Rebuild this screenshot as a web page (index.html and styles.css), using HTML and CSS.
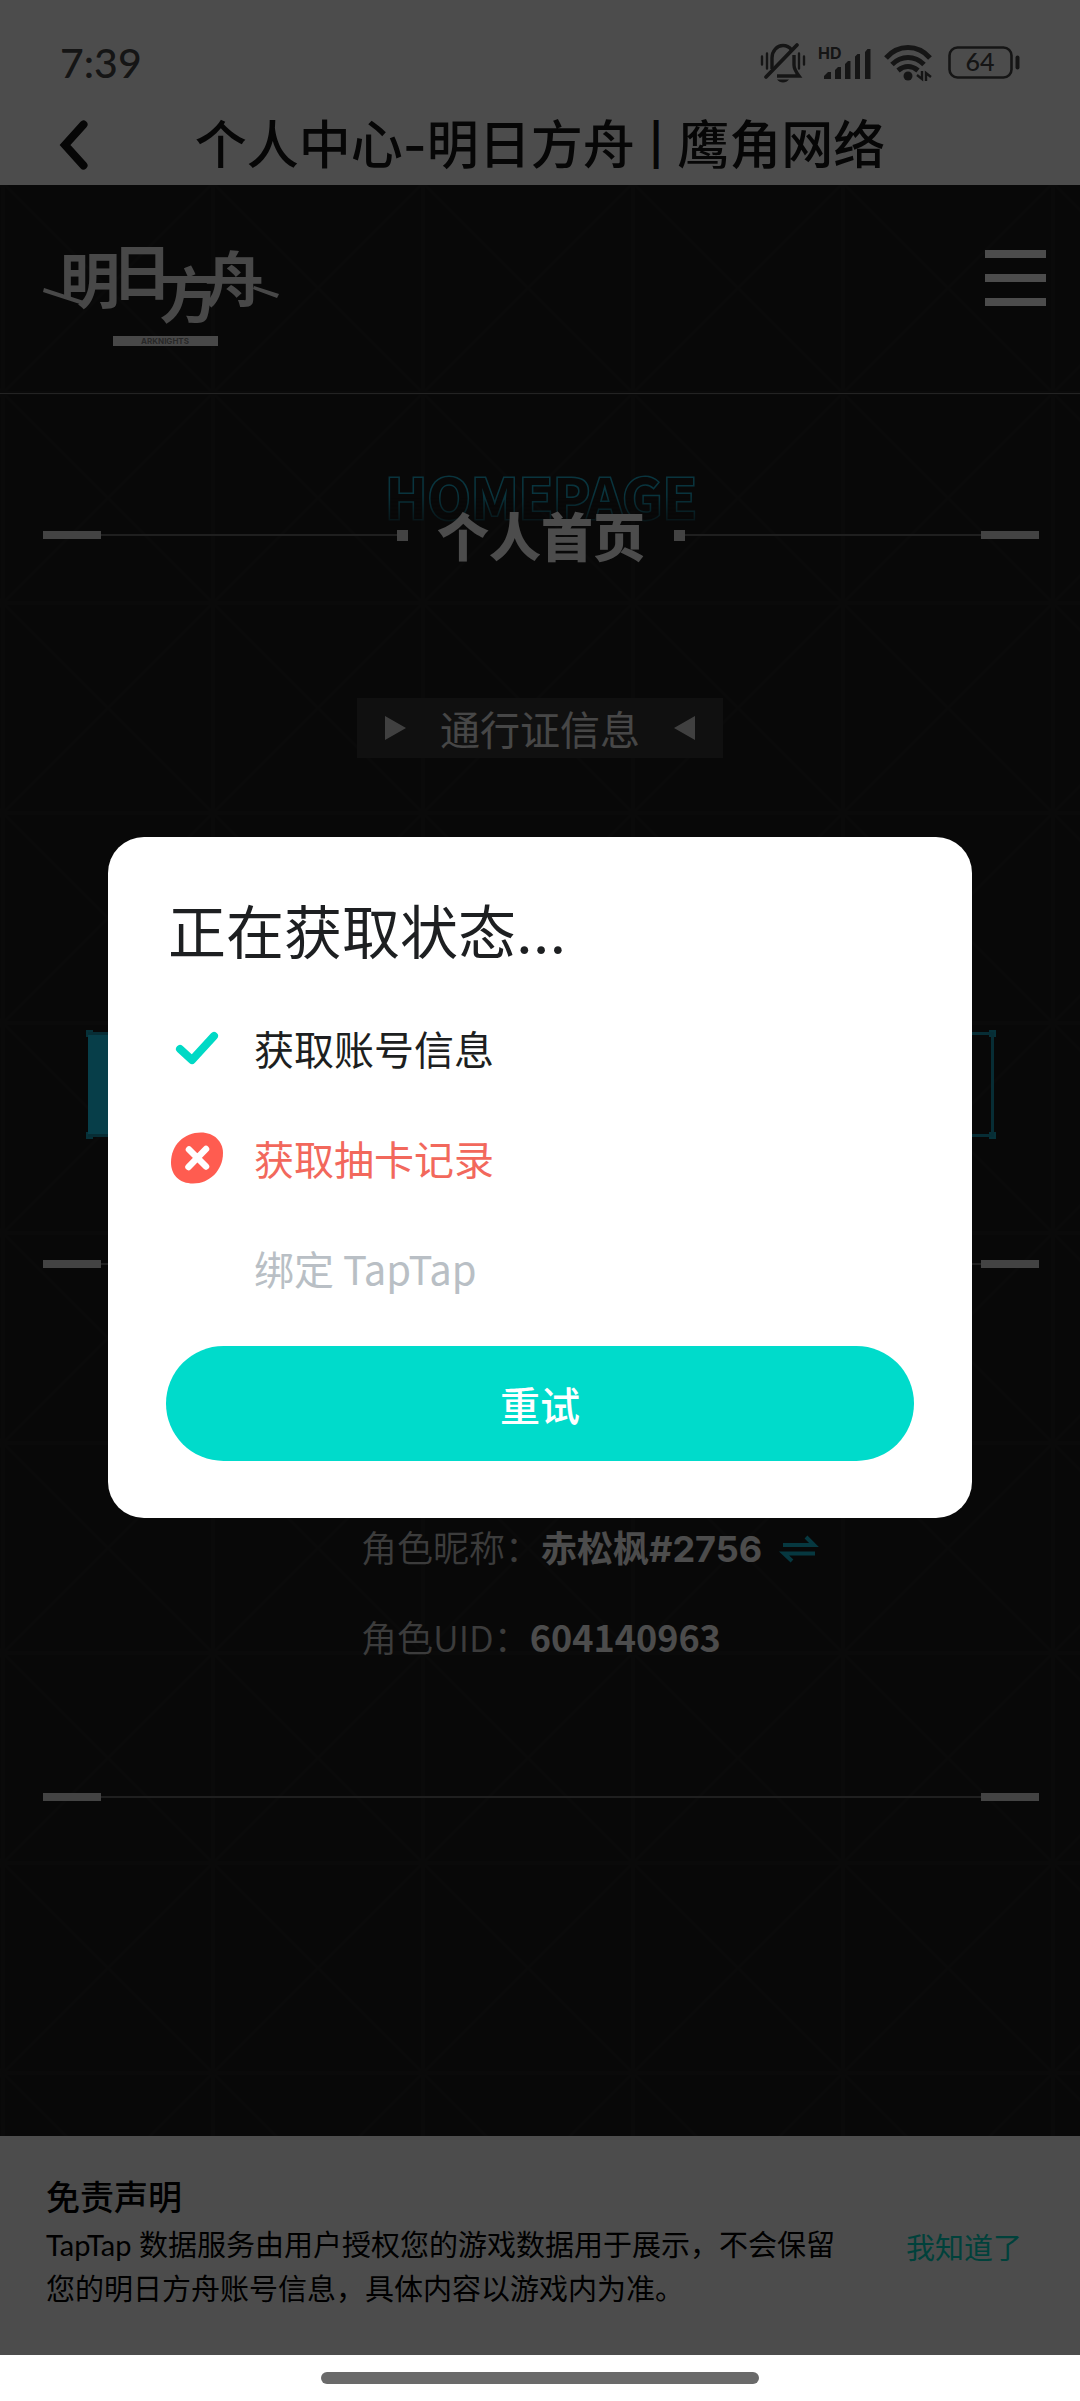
FILE: index.html
```html
<!DOCTYPE html>
<html lang="zh-CN">
<head>
<meta charset="utf-8">
<meta name="viewport" content="width=device-width, initial-scale=1">
<title>个人中心-明日方舟 | 鹰角网络</title>
<link rel="stylesheet" href="styles.css">
</head>
<body>
<div class="app">
  <div class="status">
    <span class="status-time">7:39</span>
    <div class="status-icons">
      <svg class="ic-bell" width="46" height="40" viewBox="0 0 46 40" fill="none" stroke="currentColor" stroke-width="3.4" stroke-linecap="butt">
        <path d="M2 13.500v8M7 10.500v15M39 10.500v15M44 13.500v8" stroke-width="2.400" stroke-linecap="round"/>
        <path d="M12 26V15c0-7 5-12.500 11-12.500 3.500 0 6.500 1.600 8.500 4.200M34 12v10c0 4 2 7 5 11H17"/>
        <path d="M6 34L37 2" stroke-width="3.800" stroke-linecap="round"/>
        <path d="M17 36.500h12c-1.500 2-3.500 3-6 3s-4.500-1-6-3z" fill="currentColor" stroke="none"/>
      </svg>
      <svg class="ic-signal" width="54" height="34" viewBox="0 0 54 34" fill="currentColor">
        <text x="0" y="13" class="hd">HD</text>
        <path d="M6 33v-3l4-4h3v7zM17 33v-9l3-3h3v12zM27 33V18l3-3h2.500v18zM37 33V10.500L39.500 8H42v25zM47 33V6l2.500-3H52.500v30z"/>
      </svg>
      <svg class="ic-wifi" width="48" height="38" viewBox="0 0 48 38" fill="none" stroke="currentColor" stroke-width="5">
        <path d="M2 14C8 7 15 3.500 24 3.500S40 7 46 14M8 20.500c4.500-4.500 9.500-7 16-7s11.500 2.500 16 7M14 26.500c3-2.500 6-4 10-4s7 1.500 10 4"/>
        <circle cx="24" cy="32" r="4.500" fill="currentColor" stroke="none"/>
        <path d="M38 27v8l-5-4M42 37v-8l5 4" stroke-width="2.400"/>
      </svg>
      <svg class="ic-battery" width="72" height="34" viewBox="0 0 72 34" fill="none" stroke="currentColor" stroke-width="2.600">
        <rect x="1.500" y="1.500" width="62" height="30" rx="8"/>
        <path d="M69.500 11.500v10" stroke-width="4" stroke-linecap="round"/>
        <text x="32" y="25" text-anchor="middle" class="level">64</text>
      </svg>
    </div>
  </div>
  <header class="titlebar">
    <button class="back" type="button" aria-label="返回">
      <svg width="28" height="50" viewBox="0 0 28 50" fill="none" stroke="currentColor" stroke-width="8" stroke-linecap="round" stroke-linejoin="miter"><path d="M23.500 4.500L5 25l18.500 20.500"/></svg>
    </button>
    <h1 class="title">个人中心-明日方舟 <span class="sep">|</span> 鹰角网络</h1>
  </header>

  <main class="site">
    <svg class="pattern" width="100%" height="100%" aria-hidden="true">
      <defs>
        <pattern id="grid" x="3" y="-2" width="210" height="210" patternUnits="userSpaceOnUse">
          <path d="M0 0v210M210 0v210M0 0h210M0 210h210" stroke-width="4"/>
          <path d="M0 0l210 210M210 0L0 210" stroke-width="3"/>
        </pattern>
      </defs>
      <rect width="100%" height="100%" fill="url(#grid)" stroke="none"/>
    </svg>

    <div class="site-head">
      <a class="logo" href="#" aria-label="明日方舟">
        <svg width="236" height="112" viewBox="0 0 236 112" fill="currentColor">
          <path d="M1 53l43 14-1 4L0 57zM211 51l25 8-2 4-24-9z"/>
          <g class="logo-type">
            <text x="17" y="68">明</text>
            <text x="69" y="60">日</text>
            <text x="116" y="83">方</text>
            <text x="161" y="67">舟</text>
          </g>
          <rect x="70" y="101" width="105" height="10"/>
          <text x="122" y="109" text-anchor="middle" class="logo-sub">ARKNIGHTS</text>
        </svg>
      </a>
      <button class="menu" type="button" aria-label="菜单"><span></span><span></span><span></span></button>
    </div>

    <div class="rule heading">
      <i class="cap"></i><i class="line"></i><i class="dot"></i>
      <h2>个人首页<span class="ghost">HOMEPAGE</span></h2>
      <i class="dot"></i><i class="line"></i><i class="cap"></i>
    </div>

    <h3 class="tag"><i class="tri"></i>通行证信息<i class="tri flip"></i></h3>

    <div class="tabs"><div class="tabs-box"></div></div>

    <div class="rule"><i class="cap"></i><i class="line"></i><i class="cap"></i></div>

    <dl class="role">
      <div><dt>角色昵称：</dt><dd class="name">赤松枫#2756</dd>
        <dd><button class="swap" type="button" aria-label="切换角色">
          <svg width="34" height="26" viewBox="0 0 34 26" fill="none" stroke="currentColor" stroke-width="4"><path d="M1 9h31L24 1M33 17.500H2l8 7.500"/></svg>
        </button></dd></div>
      <div><dt>角色UID：</dt><dd>604140963</dd></div>
    </dl>

    <div class="rule"><i class="cap"></i><i class="line"></i><i class="cap"></i></div>
  </main>

  <section class="notice">
    <div class="notice-text">
      <h2>免责声明</h2>
      <p>TapTap 数据服务由用户授权您的游戏数据用于展示，不会保留您的明日方舟账号信息，具体内容以游戏内为准。</p>
    </div>
    <button class="notice-ok" type="button">我知道了</button>
  </section>

  <div class="scrim">
    <div class="dialog" role="dialog" aria-modal="true" aria-labelledby="dlg">
      <h2 id="dlg">正在获取状态...</h2>
      <ul class="steps">
        <li>
          <svg width="54" height="54" viewBox="0 0 54 54" fill="none" stroke="#00d9c5" stroke-width="8" stroke-linecap="round" stroke-linejoin="round"><path d="M10 28l12 11L44 15"/></svg>
          获取账号信息
        </li>
        <li class="failed">
          <svg width="54" height="54" viewBox="0 0 54 54">
            <path d="M31 1.500c13 0 22 9 22 20.500C53 39 40 52.500 23 52.500 9.500 52.500 1 44 1 31.500 1 14 14 1.500 31 1.500z" fill="#ff5c50"/>
            <path d="M19 18.500l17 17M36 18L18.500 36" stroke="#fff" stroke-width="6.500" stroke-linecap="round"/>
          </svg>
          获取抽卡记录
        </li>
        <li class="pending"><i class="blank"></i>绑定 TapTap</li>
      </ul>
      <button class="retry" type="button">重试</button>
    </div>
  </div>
</div>
<div class="gesture"><i></i></div>
</body>
</html>
```

FILE: styles.css
```css
* { box-sizing: border-box; }

body {
  margin: 0;
  min-height: 100vh;
  display: flex;
  flex-direction: column;
  background: #fff;
  font-family: "Noto Sans CJK SC", sans-serif;
  color: #151515;
}

h1, h2, h3, p, ul, dl, dd { margin: 0; padding: 0; }

button {
  border: 0;
  padding: 0;
  background: none;
  color: inherit;
  font: inherit;
}

svg { display: block; overflow: visible; }

.app {
  position: relative;
  flex: 1;
  display: flex;
  flex-direction: column;
  background: #fff;
}

/* system status bar */
.status {
  display: flex;
  align-items: center;
  justify-content: space-between;
  height: 106px;
  padding: 20px 60px 0;
  color: #484848;
}
.status-time {
  font: 500 41px/48px Lato, sans-serif;
}
.status-icons {
  display: flex;
  align-items: center;
  gap: 12px;
}
.ic-battery { margin-left: 4px; }
.hd { font: 700 16px Inter, sans-serif; }
.level {
  font: 500 25px Lato, sans-serif;
  fill: currentColor;
  stroke: none;
}

/* page title */
.titlebar {
  position: relative;
  display: flex;
  align-items: center;
  justify-content: center;
  height: 79px;
}
.back {
  position: absolute;
  left: 60px;
  top: 14px;
}
.title {
  font: 500 52px/78px Inter, "Noto Sans CJK SC", sans-serif;
}
.sep {
  font-size: 41px;
  font-weight: 600;
  line-height: 1;
  vertical-align: 5px;
}

/* embedded game site */
.site {
  position: relative;
  flex: 1;
  background: #1b1b1b;
  color: #fff;
}
.pattern {
  position: absolute;
  inset: 0;
  stroke: #222;
}
.site > :not(.pattern) { position: relative; }

.site-head {
  display: flex;
  justify-content: space-between;
  align-items: flex-start;
  height: 209px;
  padding: 50px 34px 0 43px;
  border-bottom: 1px solid #777;
}
.logo { color: #f2f2f2; }
.logo-type {
  font-size: 60px;
  font-weight: 700;
}
.logo-sub {
  font: 700 8px Inter, sans-serif;
  fill: #888;
}
.menu {
  display: flex;
  flex-direction: column;
  gap: 16px;
  padding-top: 15px;
}
.menu span {
  width: 61px;
  height: 8px;
  background: #fff;
}

.rule {
  display: flex;
  align-items: center;
  height: 8px;
  margin: 0 41px 0 43px;
}
.cap {
  width: 58px;
  height: 8px;
  background: #e0e0e0;
}
.line {
  flex: 1;
  height: 2px;
  background: #6a6a6a;
}
.dot {
  width: 11px;
  height: 11px;
  background: #e0e0e0;
}
.heading {
  height: 64px;
  margin-top: 109px;
}
.heading h2 {
  position: relative;
  isolation: isolate;
  margin: 0 29px;
  font-size: 52px;
  font-weight: 900;
  line-height: 64px;
}
.ghost {
  position: absolute;
  z-index: -1;
  left: 50%;
  bottom: 32px;
  translate: -50% 0;
  font-size: 56px;
  font-weight: 700;
  line-height: 80px;
  color: #1b1b1b;
  -webkit-text-stroke: 3px #1fb0cf;
  paint-order: stroke fill;
  mask-image: linear-gradient(#000 50%, transparent 95%);
}

.tag {
  display: flex;
  align-items: center;
  justify-content: space-between;
  width: 366px;
  height: 60px;
  margin: 131px auto 0;
  padding: 0 28px;
  background: #363636;
  font-size: 40px;
  font-weight: 400;
  line-height: 60px;
  color: #eee;
}
.tri {
  width: 21px;
  height: 24px;
  background: #d8d8d8;
  clip-path: polygon(0 0, 100% 50%, 0 100%);
}
.tri.flip { clip-path: polygon(100% 0, 100% 100%, 0 50%); }

/* two-part switch: left half active, corners marked */
.tabs {
  --c: linear-gradient(#17a3bf, #17a3bf);
  height: 109px;
  margin: 272px 84px 121px 86px;
  padding: 2px;
  background:
    var(--c) 0 0 / 7px 7px no-repeat,
    var(--c) 100% 0 / 7px 7px no-repeat,
    var(--c) 0 100% / 7px 7px no-repeat,
    var(--c) 100% 100% / 7px 7px no-repeat;
}
.tabs-box {
  height: 100%;
  border: 3px solid #1896b2;
  border-left: 0;
  background: linear-gradient(90deg, #18d0f5 50%, transparent 50%);
}

.role {
  padding: 233px 0 112px 361px;
  font-size: 36px;
  line-height: 90px;
}
.role div {
  display: flex;
  align-items: baseline;
  height: 90px;
}
.role dt { color: #c8c8c8; font-weight: 350; }
.role dd { font-weight: 700; }
.role .name { font-family: Inter, "Noto Sans CJK SC", sans-serif; }
.swap {
  margin-left: 20px;
  color: #17bcd8;
}

/* disclaimer */
.notice {
  display: flex;
  align-items: center;
  justify-content: space-between;
  gap: 60px;
  height: 219px;
  padding: 0 58px 0 46px;
  background: #fff;
  color: #000;
}
.notice-text {
  width: 800px;
  padding-bottom: 12px;
}
.notice h2 {
  font-size: 34px;
  font-weight: 500;
  line-height: 54px;
}
.notice p {
  font: 400 29px/44px Lato, "Noto Sans CJK SC", sans-serif;
}
.notice-ok {
  font-size: 29px;
  line-height: 44px;
  color: #00d9c5;
  white-space: nowrap;
}

/* progress dialog */
.scrim {
  position: absolute;
  inset: 0;
  display: flex;
  align-items: center;
  justify-content: center;
  background: rgba(0, 0, 0, .7);
}
.dialog {
  width: 80%;
  padding: 57px 58px;
  border-radius: 36px;
  background: #fff;
  color: #1d1f21;
}
.dialog h2 {
  padding-left: 2px;
  font: 400 58px/78px Inter, "Noto Sans CJK SC", sans-serif;
}
.steps {
  list-style: none;
  padding: 21px 0 23px 4px;
  font-size: 40px;
  line-height: 56px;
}
.steps li {
  display: flex;
  align-items: center;
  gap: 30px;
  height: 110px;
}
.blank { width: 54px; }
.failed { color: #f2685c; }
.pending { color: #b9bfc5; }
.retry {
  width: 100%;
  height: 115px;
  border-radius: 58px;
  background: #00dbcb;
  color: #fff;
  font-size: 40px;
  font-weight: 500;
}

/* gesture bar */
.gesture {
  display: flex;
  align-items: center;
  justify-content: center;
  height: 46px;
}
.gesture i {
  width: 438px;
  height: 12px;
  border-radius: 6px;
  background: #6a6a6a;
}
```
